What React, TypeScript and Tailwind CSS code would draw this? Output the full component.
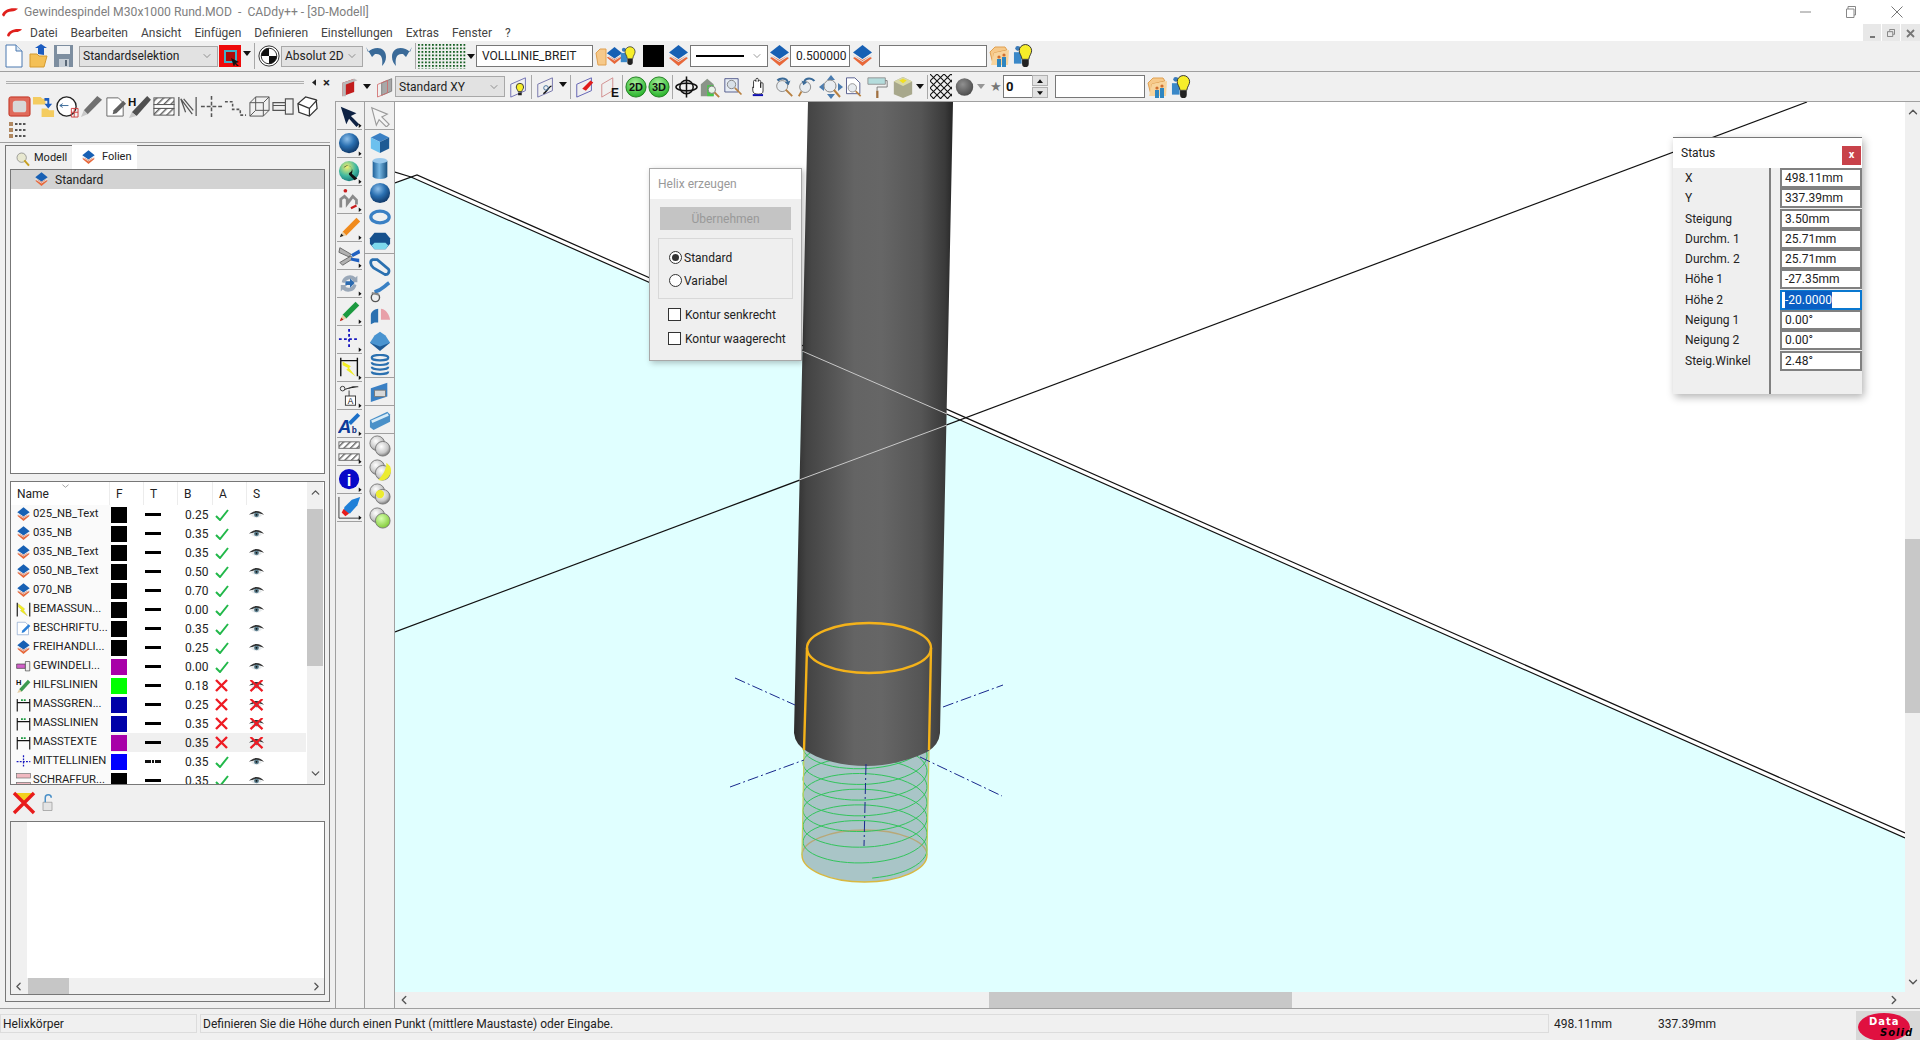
import React from 'react';
import { ChevronDown, ChevronLeft, ChevronRight, ChevronUp } from 'lucide-react';

type P = { className?: string; children?: React.ReactNode; vb?: string };

const Ic = ({ className = 'w-[22px] h-[22px]', children, vb = '0 0 24 24' }: P) => (
  <svg viewBox={vb} className={`shrink-0 ${className}`}>{children}</svg>
);

const Defs = () => (
  <svg className="absolute w-0 h-0">
    <defs>
      <radialGradient id="bb" cx="0.4" cy="0.3" r="0.8">
        <stop offset="0" stopColor="#8fc0ea" />
        <stop offset="0.45" stopColor="#2a6fb0" />
        <stop offset="1" stopColor="#0a2a55" />
      </radialGradient>
      <radialGradient id="gb" cx="0.4" cy="0.35" r="0.75">
        <stop offset="0" stopColor="#ffffff" />
        <stop offset="0.6" stopColor="#c8c8c8" />
        <stop offset="1" stopColor="#5a5a5a" />
      </radialGradient>
      <radialGradient id="db" cx="0.4" cy="0.35" r="0.75">
        <stop offset="0" stopColor="#909090" />
        <stop offset="1" stopColor="#444444" />
      </radialGradient>
      <radialGradient id="gr" cx="0.4" cy="0.35" r="0.8">
        <stop offset="0" stopColor="#d8ffb0" />
        <stop offset="1" stopColor="#70c020" />
      </radialGradient>
      <radialGradient id="grn" cx="0.45" cy="0.3" r="0.8">
        <stop offset="0" stopColor="#a6f09a" />
        <stop offset="1" stopColor="#12a818" />
      </radialGradient>
      <radialGradient id="sw" cx="0.4" cy="0.3" r="0.8">
        <stop offset="0" stopColor="#f4f070" />
        <stop offset="0.55" stopColor="#40b8a0" />
        <stop offset="1" stopColor="#106a70" />
      </radialGradient>
      <linearGradient id="cyl" x1="0" x2="1" y1="0" y2="0">
        <stop offset="0" stopColor="#1f6098" />
        <stop offset="0.45" stopColor="#78b8e4" />
        <stop offset="1" stopColor="#17507f" />
      </linearGradient>
      <linearGradient id="spindle" x1="0" x2="1" y1="0" y2="0">
        <stop offset="0" stopColor="#2c2c2c" />
        <stop offset="0.08" stopColor="#434343" />
        <stop offset="0.38" stopColor="#646464" />
        <stop offset="0.55" stopColor="#666666" />
        <stop offset="0.8" stopColor="#555555" />
        <stop offset="0.95" stopColor="#3a3a3a" />
        <stop offset="1" stopColor="#262626" />
      </linearGradient>
      <pattern id="hatch" width="5" height="5" patternUnits="userSpaceOnUse" patternTransform="rotate(-45)">
        <rect width="5" height="5" fill="#ffffff" />
        <rect width="5" height="1.5" fill="#666666" />
      </pattern>
      <pattern id="dots" width="3.500" height="3.500" patternUnits="userSpaceOnUse">
        <rect width="1.800" height="1.800" fill="#155f22" />
      </pattern>
      <pattern id="xx" width="7" height="7" patternUnits="userSpaceOnUse">
        <path d="M0 0L7 7M7 0L0 7" stroke="#111" strokeWidth="1.1" />
      </pattern>
    </defs>
  </svg>
);

const Logo = ({ className }: { className: string }) => (
  <svg viewBox="0 0 18 10" className={className}>
    <path d="M0 8C2 3 8 0 17 1.5C15 3 13 4.5 10 4.5C7 4.5 4 6 2.5 9.5C1.5 10 .5 9 0 8Z" fill="#e0201c" />
  </svg>
);

const LayerIcon = ({ className = 'w-[21px] h-[26px]' }: { className?: string }) => (
  <Ic className={className} vb="0 0 21 26">
    <path d="M1 15l3-1.5 6.500 3.500 6.500-3.500 3 1.500-9.500 8z" fill="#e8683a" />
    <path d="M1 9.500L10.500 2 20 9.500l-9.500 6.500z" fill="#1760b4" />
    <path d="M1 11.500l9.500 6.500 9.500-6.500v1.500l-9.500 6-9.500-6z" fill="#dfe6ee" />
  </Ic>
);

const Bulb = ({ className = 'w-[22px] h-[26px]' }: { className?: string }) => (
  <Ic className={className} vb="0 0 22 26">
    <circle cx="5" cy="5" r="2.600" fill="#3a7ab8" />
    <path d="M1 9h8v12H1z" fill="#3a88c8" />
    <path d="M13 1a6.500 6.500 0 0 1 6.500 6.500c0 3-2.500 5-3 9h-7c-.5-4-3-6-3-9A6.500 6.500 0 0 1 13 1z" fill="#f7ee2a" stroke="#303030" />
    <path d="M9.500 17h7v4a3 3 0 0 1-7 0z" fill="#222" />
  </Ic>
);

const FolderPeople = ({ className = 'w-[22px] h-[24px]' }: { className?: string }) => (
  <Ic className={className} vb="0 0 22 24">
    <path d="M1 8l5-5h10l2 3-13 3-1 11z" fill="#f6c98a" stroke="#e0a050" />
    <path d="M2 21L5 9l15-3-1 15z" fill="#f8d49c" />
    <path d="M8 15h4v8H8zM13 13h4v10h-4z" fill="#2f86c0" />
    <circle cx="10" cy="13" r="1.600" fill="#d07030" />
    <circle cx="15" cy="11" r="1.600" fill="#d07030" />
  </Ic>
);

const DropArrow = ({ className = '' }: { className?: string }) => (
  <svg viewBox="0 0 8 5" className={`w-[8px] h-[5px] shrink-0 ${className}`}><path d="M0 0h8L4 5z" fill="#111" /></svg>
);

const Sep = ({ className = 'h-[24px]' }: { className?: string }) => (
  <div className={`w-px bg-[#a8a8a8] shrink-0 ${className}`} />
);

const Combo = ({ className, label }: { className: string; label: string }) => (
  <div className={`flex items-center justify-between h-[21px] bg-[#e2e2e2] border border-[#a8a8a8] pl-[3px] pr-[4px] text-[12px] text-[#222] shrink-0 ${className}`}>
    <span>{label}</span>
    <ChevronDown className="w-[12px] h-[12px] text-[#555]" strokeWidth={1.2} />
  </div>
);

const Inp = ({ className, label = '' }: { className: string; label?: string }) => (
  <div className={`flex items-center h-[22px] bg-white border border-[#777] px-[5px] text-[12px] text-[#222] shrink-0 ${className}`}>{label}</div>
);

// small plane icons of the second toolbar
const Plane = ({ stroke = '#6a6ab0', children }: { stroke?: string; children?: React.ReactNode }) => (
  <Ic className="w-[22px] h-[24px]">
    <path d="M3 9L19 2v14L3 23z" fill="none" stroke={stroke} />
    {children}
  </Ic>
);

function Toolbar1() {
  return (
    <div className="flex items-center h-[31px] bg-[#f0f0f0] border-b border-[#a0a0a0] pl-[5px]">
      <Ic className="w-[18px] h-[24px]" vb="0 0 18 24">
        <path d="M1 1h10l6 6v16H1z" fill="#fff" stroke="#4a78b0" />
        <path d="M11 1v6h6" fill="#dbe8f4" stroke="#4a78b0" />
      </Ic>
      <Ic className="ml-[6px] w-[20px] h-[24px]" vb="0 0 20 24">
        <path d="M1 10h7l2 2h8l-3 11H1z" fill="#f4c056" stroke="#d49a30" />
        <path d="M7 10V4H4l6-4 6 4h-3v7z" fill="#1c5cc0" transform="translate(2 0)" />
      </Ic>
      <Ic className="ml-[4px] w-[21px] h-[24px]" vb="0 0 21 24">
        <path d="M1 1h19v22H1z" fill="#7d8ea0" />
        <path d="M4 2h13v8H4z" fill="#f0f2f4" />
        <path d="M6 15h10v8H6z" fill="#c6ced6" />
        <path d="M12 16h2v6h-2z" fill="#5a6878" />
      </Ic>
      <Combo className="ml-[5px] w-[139px]" label="Standardselektion" />
      <div className="ml-px w-[22px] h-[22px] bg-[#ee0a0a] flex items-center justify-center relative shrink-0">
        <div className="w-[13px] h-[13px] bg-[#b00808] border-2 border-[#40b0c8]" />
        <svg viewBox="0 0 8 8" className="w-[8px] h-[8px] absolute right-[2px] bottom-[1px]"><path d="M0 0l8 4-3 1 3 3-1 1-3-3-1 3z" fill="#111" /></svg>
      </div>
      <DropArrow className="ml-[2px] mb-[6px]" />
      <Sep className="ml-[3px] h-[26px]" />
      <Ic className="ml-[3px] w-[22px] h-[24px]">
        <circle cx="12" cy="12" r="11" fill="#fff" stroke="#222" />
        <circle cx="12" cy="12" r="8.500" fill="#fff" stroke="#222" />
        <path d="M12 12V3.500A8.500 8.500 0 0 0 3.500 12zM12 12v8.500a8.500 8.500 0 0 0 8.500-8.500z" fill="#111" />
      </Ic>
      <Combo className="ml-px w-[82px]" label="Absolut 2D" />
      <Ic className="ml-[2px] w-[24px] h-[24px]">
        <path d="M3 8c6-6 18-6 18 5 0 4-2 7-4 9 1-7 0-13-7-12L7 13 1 3z" fill="#3a6a98" />
      </Ic>
      <Ic className="w-[24px] h-[24px]">
        <path d="M21 8C15 2 3 2 3 13c0 4 2 7 4 9-1-7 0-13 7-12l3 3 6-10z" fill="#3a6a98" />
      </Ic>
      <Sep className="ml-[2px] h-[26px]" />
      <svg className="ml-[2px] w-[48px] h-[25px] shrink-0"><rect width="48" height="25" fill="url(#dots)" /></svg>
      <DropArrow className="ml-[1px]" />
      <Inp className="ml-[1px] w-[117px]" label="VOLLLINIE_BREIT" />
      <Ic className="ml-[2px] w-[12px] h-[24px]" vb="0 0 12 24">
        <path d="M1 9l4-4h6v16H3z" fill="#f6c98a" stroke="#e0a050" />
      </Ic>
      <LayerIcon className="-ml-px w-[17px] h-[24px]" />
      <Bulb className="-ml-[3px] w-[17px] h-[26px]" />
      <div className="ml-[6px] w-[21px] h-[22px] bg-black shrink-0" />
      <LayerIcon className="ml-[4px] w-[21px] h-[26px]" />
      <div className="ml-px flex items-center justify-between w-[78px] h-[22px] bg-white border border-[#777] pl-[5px] pr-[4px] shrink-0">
        <div className="w-[48px] h-[2px] bg-black" />
        <ChevronDown className="w-[12px] h-[12px] text-[#555]" strokeWidth={1.2} />
      </div>
      <LayerIcon className="ml-px w-[21px] h-[26px]" />
      <Inp className="w-[60px]" label="0.500000" />
      <LayerIcon className="ml-[2px] w-[21px] h-[26px]" />
      <Inp className="ml-[6px] w-[108px]" />
      <FolderPeople className="ml-[2px] w-[22px] h-[24px]" />
      <Bulb className="ml-[2px] w-[21px] h-[26px]" />
    </div>
  );
}

function Toolbar2() {
  return (
    <div className="flex items-center h-[30px] bg-[#f0f0f0] border-b border-[#a0a0a0] pl-[5px]">
      <Ic className="w-[20px] h-[24px]">
        <path d="M3 7l14-5v16L3 23z" fill="#c21c1c" />
        <path d="M3 7l14-5 4 2-14 5v14l-4 0z" fill="#b8b8b8" />
      </Ic>
      <DropArrow className="ml-[3px]" />
      <Ic className="ml-[4px] w-[20px] h-[24px]">
        <path d="M8 7l12-5v15L8 22z" fill="#a8a8a8" stroke="#777" />
        <path d="M3 9l12-5v15L3 24z" fill="none" stroke="#d06a6a" />
      </Ic>
      <Combo className="w-[110px]" label="Standard XY" />
      <div className="ml-[3px]"><Plane><path d="M13 8a4 4 0 0 1 4 4c0 2-1.500 3-2 5h-4c-.5-2-2-3-2-5a4 4 0 0 1 4-4z" fill="#f7ee2a" stroke="#333" /><path d="M11 18h4v3h-4z" fill="#222" /></Plane></div>
      <Sep className="ml-px h-[24px]" />
      <div className="ml-[3px]"><Plane stroke="#7070a8"><path d="M9 19c3 0 6-8 9-8" fill="none" stroke="#111" strokeWidth="1.500" /><circle cx="12" cy="13" r="2.500" fill="none" stroke="#3a6a98" /></Plane></div>
      <DropArrow className="ml-[2px] mb-[4px]" />
      <Sep className="ml-[3px] h-[24px]" />
      <div className="ml-[3px]"><Plane stroke="#5a5ab0"><path d="M9 14l9-9 3 2-8 9z" fill="#e01c1c" /></Plane></div>
      <Ic className="ml-[3px] w-[22px] h-[24px]">
        <path d="M3 9L15 2v14L3 23z" fill="none" stroke="#d08a8a" />
        <text x="13" y="23" fontSize="13" fontWeight="700" fontFamily="Liberation Sans" fill="#111">E</text>
      </Ic>
      <Sep className="ml-[1px] h-[24px]" />
      <Ic className="ml-[2px] w-[22px] h-[24px]">
        <circle cx="12" cy="12" r="11" fill="url(#grn)" stroke="#1a7a1a" />
        <text x="12" y="16.500" textAnchor="middle" fontSize="12" fontWeight="700" fontFamily="Liberation Sans" fill="#111">2D</text>
      </Ic>
      <Ic className="ml-[1px] w-[22px] h-[24px]">
        <circle cx="12" cy="12" r="11" fill="url(#grn)" stroke="#1a7a1a" />
        <text x="12" y="16.500" textAnchor="middle" fontSize="12" fontWeight="700" fontFamily="Liberation Sans" fill="#111">3D</text>
      </Ic>
      <Sep className="ml-[2px] h-[24px]" />
      <Ic className="ml-[2px] w-[23px] h-[24px]">
        <circle cx="12" cy="12" r="7" fill="none" stroke="#111" strokeWidth="1.600" />
        <ellipse cx="12" cy="12" rx="11" ry="4" fill="none" stroke="#111" strokeWidth="1.600" />
        <path d="M12 1v22" stroke="#111" strokeWidth="1.600" />
      </Ic>
      <Ic className="ml-[1px] w-[22px] h-[26px]">
        <path d="M2 9l7-6 7 6v13H2z" fill="#8a9488" />
        <path d="M9 10h7v12H9z" fill="#46c846" />
        <circle cx="14" cy="15" r="4" fill="#e8f4e8" stroke="#777" />
        <path d="M17 18l5 5" stroke="#b88040" strokeWidth="2" />
      </Ic>
      <Ic className="ml-[3px] w-[20px] h-[26px]">
        <path d="M1 2h16v16H1z" fill="#e6ecf4" stroke="#404880" />
        <circle cx="9" cy="9" r="5" fill="#d8e0e8" stroke="#777" />
        <path d="M13 13l8 8" stroke="#b88040" strokeWidth="2" />
      </Ic>
      <Ic className="ml-[4px] w-[19px] h-[28px]">
        <path d="M7 13V5a1.500 1.500 0 0 1 3 0V2.500a1.500 1.500 0 0 1 3 0V5a1.500 1.500 0 0 1 3 0v8V8a1.500 1.500 0 0 1 3 0v9c0 3-2 4-6 4s-7-1-7-5v-4a1.500 1.500 0 0 1 1 1z" fill="#fff" stroke="#111" />
        <path d="M6 21h13v2.500H6z" fill="#1010b0" />
      </Ic>
      <Ic className="ml-[6px] w-[22px] h-[26px]">
        <circle cx="10" cy="11" r="6" fill="#e8ecf0" stroke="#888" />
        <path d="M14 15l7 7" stroke="#b88040" strokeWidth="2" />
        <path d="M4 4C8 0 16 1 17 6l2-1-2 5-4-3 2-1C13 3 8 3 6 6z" fill="#3a6a98" />
      </Ic>
      <Ic className="ml-[1px] w-[22px] h-[26px]">
        <circle cx="10" cy="12" r="6" fill="#e8ecf0" stroke="#888" />
        <path d="M6 17l-3 5" stroke="#b88040" strokeWidth="2" />
        <path d="M21 5C17 0 9 1 8 6l-2-1 2 5 4-3-2-1c2-3 7-3 9 0z" fill="#3a6a98" />
      </Ic>
      <Ic className="ml-[1px] w-[24px] h-[28px]">
        <path d="M12 0l4 5H8zM12 24l4-5H8zM0 12l5-4v8zM24 12l-5-4v8z" fill="#4a7cb0" />
        <circle cx="11" cy="11" r="6" fill="#e8ecf0" stroke="#888" />
        <path d="M15 15l6 7" stroke="#b88040" strokeWidth="2" />
      </Ic>
      <Ic className="ml-[1px] w-[20px] h-[26px]">
        <path d="M3 1h10l6 6v13H3z" fill="#fff" stroke="#404880" />
        <circle cx="10" cy="13" r="5" fill="#e8ecf0" stroke="#888" />
        <path d="M14 17l6 6" stroke="#b88040" strokeWidth="2" />
      </Ic>
      <Ic className="ml-[3px] w-[22px] h-[26px]">
        <path d="M1 2h19v7H1z" fill="#b4dcdc" stroke="#909090" />
        <path d="M20 5h2v7H11v4" fill="none" stroke="#777" />
        <path d="M10 16h2.500v8H10z" fill="#a07040" />
      </Ic>
      <Ic className="ml-[3px] w-[22px] h-[26px]">
        <path d="M2 6l10-5 10 5v14l-10 4-10-4z" fill="#a8a88c" />
        <path d="M12 1l10 5-10 5L2 6z" fill="#d8d8a8" />
        <path d="M8 5l4-2 4 2-4 3z" fill="#f2e020" />
      </Ic>
      <DropArrow className="ml-[2px]" />
      <Sep className="ml-[3px] h-[24px]" />
      <svg className="ml-[2px] w-[22px] h-[25px] shrink-0"><rect width="22" height="25" fill="url(#xx)" /></svg>
      <Ic className="ml-[3px] w-[19px] h-[22px]"><circle cx="12" cy="12" r="11" fill="url(#db)" /></Ic>
      <DropArrow className="ml-[3px] opacity-40" />
      <span className="ml-[5px] text-[13px] leading-none text-[#777]">★</span>
      <div className="ml-[1px] flex items-center w-[29px] h-[23px] bg-white border border-[#777] border-r-0 pl-[2px] font-bold text-[13px] text-[#111] shrink-0">0</div>
      <div className="flex flex-col gap-px w-[16px] shrink-0">
        <div className="h-[11px] flex items-center justify-center bg-[#e2e2e2] border border-[#b0b0b0]"><svg viewBox="0 0 8 5" className="w-[6px] h-[4px]"><path d="M0 5h8L4 0z" fill="#111" /></svg></div>
        <div className="h-[11px] flex items-center justify-center bg-[#e2e2e2] border border-[#b0b0b0]"><svg viewBox="0 0 8 5" className="w-[6px] h-[4px]"><path d="M0 0h8L4 5z" fill="#111" /></svg></div>
      </div>
      <Inp className="ml-[7px] w-[90px] h-[23px]" />
      <FolderPeople className="ml-[2px] w-[22px] h-[24px]" />
      <Bulb className="ml-[2px] w-[21px] h-[26px]" />
    </div>
  );
}

// flyout triangle of the left tool column
const Fly = () => <path d="M22.500 21l3 2.500-3 2.500z" fill="#111" />;

const col1: React.ReactNode[] = [
  <path d="M3 3l17 7-6 3 9 9-3 3-8-9-3 6z" fill="#0e2244" />,
  <circle cx="12" cy="12" r="11" fill="url(#bb)" />,
  <><circle cx="12" cy="12" r="11" fill="url(#sw)" /><path d="M6 9c3-5 10-3 9 2-1 3-4 2-3 5l6 6 3-2-6-5c2-5-1-9-5-9-2 0-3 1-4 3z" fill="#111" /></>,
  <><path d="M3 21v-9l4-3 3 3v5l6-8 4 4v5" fill="none" stroke="#8a8a8a" strokeWidth="3" /><circle cx="8" cy="3" r="2" fill="#c81c1c" /><path d="M14 22l6-3" stroke="#c81c1c" strokeWidth="2.500" /></>,
  <><path d="M20 2l4 4L9 21l-4-4z" fill="#f08a1c" /><path d="M5 17l4 4-7 2z" fill="#e8d0a8" /><path d="M2 23l1.500-4 2.500 2.500z" fill="#222" /></>,
  <><path d="M2 4l12 7-2 3L1 9zM2 20l12-7 2 3-11 7z" fill="#b0b0b0" stroke="#666" /><path d="M14 11l9-5 1 4-8 4zM14 15l9 1v4l-9-2z" fill="#2060c0" /></>,
  <><path d="M4 11a9 9 0 0 1 15-5l2-2v7h-7l2-2a6 6 0 0 0-9 3zM20 14a9 9 0 0 1-15 5l-2 2v-7h7l-2 2a6 6 0 0 0 9-3z" fill="#9aa8b8" /><path d="M8 10h5V7l5 5-5 5v-3H8z" fill="#2a6ab0" /></>,
  <><path d="M19 2l4 4L9 20l-4-4z" fill="#1c9a40" /><path d="M5 16l4 4-7 3z" fill="#e8d0a8" /><path d="M2 23l1.500-4 2.500 2.500z" fill="#c02020" /></>,
  <path d="M12 1v22M1 12h22" stroke="#1818c0" strokeWidth="2" strokeDasharray="3 2.500" />,
  <><path d="M3 2v20M21 2v20M3 5h18" stroke="#111" strokeWidth="1.500" /><path d="M5 6l9 5-2 2 7 9-10-7 2-2-6-3z" fill="#f2ee20" /></>,
  <><circle cx="5" cy="5" r="2.500" fill="none" stroke="#333" /><path d="M7 6l9-3h6M12 7v6" stroke="#333" /><rect x="8" y="13" width="11" height="10" fill="#fff" stroke="#333" /><text x="13.500" y="21.500" textAnchor="middle" fontSize="9" fontFamily="Liberation Sans" fill="#111">A</text></>,
  <><text x="0" y="23" fontSize="20" fontWeight="700" fontStyle="italic" fontFamily="Liberation Sans" fill="#0c3a9a">A</text><text x="15" y="23" fontSize="9" fontWeight="700" fontFamily="Liberation Sans" fill="#0c2a7a">b</text><path d="M21 1l3 3-10 10-3-3z" fill="#1c70c8" /></>,
  <><rect x="1" y="2" width="22" height="7" fill="url(#hatch)" stroke="#666" /><rect x="1" y="15" width="22" height="7" fill="url(#hatch)" stroke="#666" /></>,
  <><circle cx="12" cy="12" r="11" fill="#0808c8" /><text x="12" y="19" textAnchor="middle" fontSize="18" fontWeight="700" fontFamily="Liberation Sans" fill="#fff">i</text></>,
  <><path d="M1 1v23h23" fill="none" stroke="#333" /><path d="M15 4l9-3-3 9-8 9-7-2 1-5z" fill="#2080d8" /><path d="M6 14l6 5-4 3-4-4z" fill="#e81c1c" /></>,
];

const Ball2 = ({ a = 'url(#gb)', b = 'url(#gb)' }: { a?: string; b?: string }) => (
  <><circle cx="9" cy="9" r="8" fill={a} stroke="#777" /><circle cx="15" cy="15" r="8" fill={b} stroke="#777" /></>
);

const col2: { h: string; sep?: boolean; el: React.ReactNode }[] = [
  { h: 'h-[28px]', sep: true, el: <path d="M3 3l17 7-6 3 8 8-3 3-8-8-3 6z" fill="#f4f4f4" stroke="#9a9a9a" strokeWidth="1.200" /> },
  { h: 'h-[25px]', el: <><path d="M2 6l10-5 10 5-10 5z" fill="#3a80c4" /><path d="M2 6l10 5v12L2 18z" fill="#6cc0ee" /><path d="M22 6l-10 5v12l10-5z" fill="#1e5a94" /></> },
  { h: 'h-[25px]', el: <><path d="M4 4v17a8 3 0 0 0 16 0V4z" fill="url(#cyl)" /><ellipse cx="12" cy="4" rx="8" ry="3" fill="#98c8ec" /></> },
  { h: 'h-[25px]', el: <circle cx="12" cy="12" r="11" fill="url(#bb)" /> },
  { h: 'h-[24px]', el: <ellipse cx="12" cy="12" rx="10" ry="6.500" fill="none" stroke="#3a80c4" strokeWidth="3.500" /> },
  { h: 'h-[25px]', sep: true, el: <><path d="M6 3h12l5 6v6l-5 6H6l-5-6V9z" fill="#16508c" /><path d="M6 14h12l3 3-3 4H6l-3-4z" fill="#7ed8ec" /></> },
  { h: 'h-[25px]', el: <path d="M4 4h5l12 10c2 3 0 7-4 6L5 13C1 10 1 5 4 4z" fill="none" stroke="#2a70b0" strokeWidth="3" /> },
  { h: 'h-[25px]', el: <><path d="M22 2C16 6 14 10 6 12" fill="none" stroke="#3a80c4" strokeWidth="4" /><circle cx="7" cy="18" r="4.500" fill="none" stroke="#555" strokeWidth="1.500" /><path d="M3 13l8 2" stroke="#888" strokeWidth="2" /></> },
  { h: 'h-[25px]', el: <><path d="M2 20V10c0-4 5-7 8-7v15H6z" fill="#2a70b0" /><path d="M13 3c4 0 9 5 10 12H13z" fill="#e8a0a8" /></> },
  { h: 'h-[24px]', el: <><path d="M1 14l11 9 11-9-5-3H6z" fill="#1e5a94" /><path d="M6 6l6-4 6 4 5 8-11 4L1 14z" fill="#4a94d0" /></> },
  { h: 'h-[25px]', sep: true, el: <path d="M3 4a9 3 0 0 1 18 0a9 3 0 0 1-18 0M3 9a9 3 0 0 0 18 0M3 14a9 3 0 0 0 18 0M3 19a9 3 0 0 0 18 0" fill="none" stroke="#2a70b0" strokeWidth="2.400" /> },
  { h: 'h-[28px]', sep: true, el: <><path d="M2 8l18-6v15L2 23z" fill="#3a80c4" /><path d="M6 10h12v7H6z" fill="#d8d8d8" stroke="#777" /></> },
  { h: 'h-[28px]', sep: true, el: <><path d="M1 12L20 3l3 3v8L5 23l-4-3z" fill="#4a90c8" /><path d="M3 14l18-8" stroke="#d8ecf8" strokeWidth="3" /></> },
  { h: 'h-[24px]', el: <Ball2 /> },
  { h: 'h-[24px]', el: <><Ball2 /><path d="M10 23A11 11 0 0 0 23 8l-4-4c0 8-4 13-9 19z" fill="#ecec30" /></> },
  { h: 'h-[24px]', el: <><Ball2 /><circle cx="12" cy="12" r="4.500" fill="#ecec30" /></> },
  { h: 'h-[24px]', el: <Ball2 b="url(#gr)" /> },
];

function VerticalTools() {
  return (
    <div className="flex w-[60px] shrink-0 bg-[#f0f0f0] border-l border-[#a0a0a0]">
      <div className="w-[29px] border-r border-[#a0a0a0] flex flex-col pl-[1px]">
        {col1.map((el, i) => (
          <div key={i} className="h-[28px] flex items-center justify-center border-b border-[#a0a0a0] mr-[2px]">
            <svg viewBox="0 0 26 26" className="w-[24px] h-[24px]">{el}<Fly /></svg>
          </div>
        ))}
      </div>
      <div className="flex-1 border-r border-[#a0a0a0] flex flex-col">
        {col2.map((c, i) => (
          <div key={i} className={`${c.h} flex items-center justify-center ${c.sep ? 'border-b border-[#a0a0a0]' : ''}`}>
            <Ic className="w-[22px] h-[22px]">{c.el}</Ic>
          </div>
        ))}
      </div>
    </div>
  );
}

const Dim = ({ color }: { color: string }) => (
  <Ic className="w-[15px] h-[15px] shrink-0">
    <path d="M2 3v20M22 3v20M2 9h20" stroke="#111" strokeWidth="1.800" fill="none" />
    <path d="M8 5h8" stroke={color} strokeWidth="3" strokeDasharray="3 1.500" />
  </Ic>
);

const rowIcons: Record<string, React.ReactNode> = {
  layer: <LayerIcon className="w-[15px] h-[17px]" />,
  bem: (
    <Ic className="w-[15px] h-[15px]">
      <path d="M2 1v22M22 1v22" stroke="#111" strokeWidth="1.800" />
      <path d="M4 3l10 8-2 2 6 9-11-8 2-2-5-4z" fill="#f2ee20" stroke="#b8b020" strokeWidth=".5" />
    </Ic>
  ),
  doc: (
    <Ic className="w-[15px] h-[15px]">
      <path d="M2 2h13l5 5v15H2z" fill="#fff" stroke="#7a9ac8" />
      <path d="M10 15l10-10 3 3-10 10-4 1z" fill="#2c80d8" />
    </Ic>
  ),
  screw: (
    <Ic className="w-[15px] h-[15px]">
      <path d="M1 8h14v7H1z" fill="#d060c8" stroke="#333" />
      <path d="M15 4h7v15h-7z" fill="#eee" stroke="#333" />
    </Ic>
  ),
  hilf: (
    <Ic className="w-[15px] h-[16px]">
      <text x="0" y="11" fontSize="12" fontWeight="700" fontFamily="Liberation Sans" fill="#111">H</text>
      <path d="M19 2l4 4L9 21l-4-4z" fill="#3c9a50" />
      <path d="M5 17l4 4-7 2z" fill="#e8d0a8" />
    </Ic>
  ),
  gren: <Dim color="#1c9a40" />,
  mitt: (
    <Ic className="w-[15px] h-[15px]">
      <path d="M12 2v20M1 12h22" stroke="#1818c0" strokeWidth="2" strokeDasharray="3 2" />
    </Ic>
  ),
  schr: (
    <Ic className="w-[15px] h-[15px]">
      <rect x="1" y="1" width="22" height="7" fill="#f0b8c0" stroke="#666" />
      <rect x="1" y="15" width="22" height="7" fill="#f0b8c0" stroke="#666" />
    </Ic>
  ),
};

const layers = [
  { icon: 'layer', name: '025_NB_Text', color: 'bg-black', b: '0.25', on: true },
  { icon: 'layer', name: '035_NB', color: 'bg-black', b: '0.35', on: true },
  { icon: 'layer', name: '035_NB_Text', color: 'bg-black', b: '0.35', on: true },
  { icon: 'layer', name: '050_NB_Text', color: 'bg-black', b: '0.50', on: true },
  { icon: 'layer', name: '070_NB', color: 'bg-black', b: '0.70', on: true },
  { icon: 'bem', name: 'BEMASSUN...', color: 'bg-black', b: '0.00', on: true },
  { icon: 'doc', name: 'BESCHRIFTU...', color: 'bg-black', b: '0.35', on: true },
  { icon: 'layer', name: 'FREIHANDLI...', color: 'bg-black', b: '0.25', on: true },
  { icon: 'screw', name: 'GEWINDELI...', color: 'bg-[#a800a8]', b: '0.00', on: true },
  { icon: 'hilf', name: 'HILFSLINIEN', color: 'bg-[#00ff00]', b: '0.18', on: false },
  { icon: 'gren', name: 'MASSGREN...', color: 'bg-[#0000a8]', b: '0.25', on: false },
  { icon: 'gren', name: 'MASSLINIEN', color: 'bg-[#0000a8]', b: '0.35', on: false },
  { icon: 'gren', name: 'MASSTEXTE', color: 'bg-[#a800a8]', b: '0.35', on: false, hi: true },
  { icon: 'mitt', name: 'MITTELLINIEN', color: 'bg-[#0000ff]', b: '0.35', on: true, dash: true },
  { icon: 'schr', name: 'SCHRAFFUR...', color: 'bg-black', b: '0.35', on: true },
];

const Eye = () => (
  <svg viewBox="0 0 16 10" className="w-[15px] h-[10px]">
    <path d="M0 5c3-5 12-6 16 0-4-2-12-2-16 0z" fill="#333" />
    <path d="M2 5c3 4 9 4 12 0-3-2-9-2-12 0z" fill="#e4e8ea" />
    <circle cx="8" cy="4.800" r="2.600" fill="#567a8a" />
    <circle cx="8" cy="4.800" r="1" fill="#111" />
  </svg>
);

const Check = () => (
  <svg viewBox="0 0 14 12" className="w-[14px] h-[12px]"><path d="M1 7l4 4 8-10" fill="none" stroke="#22b84a" strokeWidth="2" /></svg>
);

const Cross = () => (
  <svg viewBox="0 0 13 13" className="w-[13px] h-[13px]"><path d="M1 1l11 11M12 1L1 12" stroke="#ee1c24" strokeWidth="2.400" /></svg>
);

function LayerTable() {
  return (
    <div className="mx-[5px] h-[304px] border border-[#777] bg-white flex overflow-hidden text-[12px] text-[#222] relative">
      <div className="w-[295px] shrink-0 flex flex-col">
        <div className="grid grid-cols-[99px_34px_34px_35px_34px_59px] h-[23px] shrink-0 relative">
          {['Name', 'F', 'T', 'B', 'A', 'S'].map((h, i) => (
            <div key={h} className={`flex items-center ${i === 5 ? 'pl-[6px]' : 'pl-[6px] border-r border-[#ececec]'}`}>{h}</div>
          ))}
          <svg viewBox="0 0 8 4" className="absolute left-[51px] top-[2px] w-[7px] h-[4px]"><path d="M.5.5L4 3.500 7.500.5" fill="none" stroke="#999" /></svg>
        </div>
        {layers.map((l) => (
          <div key={l.name} className="flex items-center h-[19px] shrink-0">
            <div className="w-[100px] shrink-0 flex items-center gap-[2px] pl-[5px] bg-[#fafafa] h-full whitespace-nowrap overflow-hidden text-[11.250px]">
              {rowIcons[l.icon]}
              <span>{l.name}</span>
            </div>
            <div className={`flex items-center flex-1 h-full ${l.hi ? 'bg-[#f0f0f0]' : ''}`}>
              <div className={`w-[16px] h-[16px] shrink-0 ${l.color}`} />
              <div className="w-[34px] shrink-0 flex justify-end">
                {l.dash
                  ? <div className="w-[16px] h-[3px] bg-[linear-gradient(90deg,#111_0_6px,transparent_6px_7px,#111_7px_9px,transparent_9px_10px,#111_10px)]" />
                  : <div className="w-[16px] h-[3px] bg-black" />}
              </div>
              <div className="w-[54px] shrink-0 pl-[24px]">{l.b}</div>
              <div className="w-[34px] shrink-0">{l.on ? <Check /> : <Cross />}</div>
              <div className="relative w-[15px] h-[12px] flex items-center">
                <Eye />
                {!l.on && <svg viewBox="0 0 15 13" className="absolute inset-0 w-[15px] h-[12px]"><path d="M1 0l13 12M14 0L1 12" stroke="#ee1c24" strokeWidth="2.400" /></svg>}
              </div>
            </div>
          </div>
        ))}
      </div>
      <div className="w-[16px] ml-[1px] shrink-0 bg-[#f0f0f0] flex flex-col items-center justify-between py-[4px] relative">
        <ChevronUp className="w-[13px] h-[13px] text-[#555]" strokeWidth={2.400} />
        <ChevronDown className="w-[13px] h-[13px] text-[#555]" strokeWidth={2.400} />
        <div className="absolute left-0 right-0 top-[27px] h-[157px] bg-[#c6c6c6]" />
      </div>
    </div>
  );
}

function LeftPanel() {
  const tools: React.ReactNode[] = [
    <><rect x="1" y="2" width="22" height="20" rx="2" fill="#e06a5a" stroke="#c03020" /><rect x="5" y="6" width="14" height="12" rx="3" fill="#d8d8d8" /></>,
    <><path d="M1 2h8l2 2h3v6H1z" fill="#f4cc60" /><path d="M10 14h6l2 2h5v7H10z" fill="#f4cc60" /><path d="M13 3h5v6h3l-4 5-4-5h3V6h-3z" fill="#1c5cc0" /></>,
    <><circle cx="11" cy="12" r="10" fill="#fff" stroke="#222" strokeWidth="1.400" /><path d="M4 11h9M4 11l3-2M4 11l3 2" stroke="#3a6a98" /><path d="M16 14h7v9h-7zM16 18h7M19 14v9" fill="none" stroke="#d04040" /></>,
    <><path d="M18 1l5 4L8 20l-4-4z" fill="#707070" /><path d="M4 16l4 4-7 3z" fill="#c8c8c8" /></>,
    <><path d="M3 3h12l5 5v14H3z" fill="#fff" stroke="#666" /><path d="M10 16l10-10 3 3-10 10-4 1z" fill="#606060" /></>,
    <><text x="0" y="11" fontSize="12" fontWeight="700" fontFamily="Liberation Sans" fill="#111">H</text><path d="M20 1l4 4L9 22l-5-4z" fill="#505050" /><path d="M4 18l5 4-8 2z" fill="#c8c8c8" /></>,
    <><rect x="2" y="3" width="21" height="7" fill="url(#hatch)" stroke="#555" /><rect x="2" y="10" width="21" height="4" fill="#fff" stroke="#555" /><rect x="2" y="14" width="21" height="7" fill="url(#hatch)" stroke="#555" /></>,
    <path d="M3 2v20M21 2v20M5 4l12 16M5 4l5 14M8 4l10 12" stroke="#555" fill="none" strokeWidth="1.300" />,
    <path d="M12 1v22M1 12h22" stroke="#555" strokeWidth="1.600" strokeDasharray="4 2" />,
    <path d="M1 7h8v8h8v6h6" stroke="#555" fill="none" strokeWidth="1.600" strokeDasharray="3 2" />,
    <path d="M8 2h14v14H8zM2 8h14v14H2zM2 8l6-6M16 8l6-6M16 22l6-6M2 22l6-6" stroke="#555" fill="none" strokeWidth="1" />,
    <path d="M1 8h13v8H1zM1 11h13M14 4h8v16h-8z" stroke="#555" fill="#f0f0f0" strokeWidth="1.200" />,
    <path d="M2 9l8-7 11 3 1 9-8 8-11-4zM2 9l12 5M14 14l8-9M14 14v8" stroke="#333" fill="#fff" strokeWidth="1.300" />,
  ];
  return (
    <div className="w-[335px] shrink-0 bg-[#f0f0f0] flex flex-col">
      <div className="h-[20px] flex items-center pl-[6px] shrink-0">
        <div className="w-[298px] h-[3px] border-y border-[#b0b0b0]" />
        <svg viewBox="0 0 5 8" className="ml-[8px] w-[4px] h-[7px]"><path d="M5 0v8L0 4z" fill="#222" /></svg>
        <span className="ml-[7px] text-[13px] font-bold leading-none text-[#222]">×</span>
      </div>
      <div className="h-[51px] pl-[8px] border-b border-[#a0a0a0] mr-[5px] shrink-0">
        <div className="flex items-center gap-[1px] h-[28px]">
          {tools.map((t, i) => (
            <Ic key={i} className="w-[23px] h-[23px]">{t}</Ic>
          ))}
        </div>
        <svg viewBox="0 0 20 18" className="w-[20px] h-[18px] mt-[1px]">
          <path d="M1 1h4v4H1zM1 7h4v4H1zM1 13h4v4H1z" fill="#b08860" />
          <path d="M7 3h11M7 9h11M7 15h11" stroke="#222" strokeWidth="1.600" strokeDasharray="2.500 1.500" />
        </svg>
      </div>
      <div className="mx-[5px] mt-[2px] h-[857px] border border-[#777] flex flex-col pb-[3px] relative">
        <div className="h-[23px] flex items-end pl-[5px] shrink-0">
          <div className="w-[61px] h-[21px] flex items-center gap-[3px] pl-[4px] text-[11px] text-[#222]">
            <Ic className="w-[16px] h-[16px]"><circle cx="10" cy="10" r="7" fill="#e8e8d0" stroke="#777" /><path d="M14 14l7 8" stroke="#c8a020" strokeWidth="3" /></Ic>
            Modell
          </div>
          <div className="w-[65px] h-[24px] bg-white flex items-center gap-[6px] pl-[9px] text-[11px] text-[#222]">
            <LayerIcon className="w-[15px] h-[17px]" />
            Folien
          </div>
        </div>
        <div className="h-[305px] border border-[#777] mx-[4px] bg-white shrink-0">
          <div className="h-[19px] bg-[#d3d3d3] flex items-center gap-[6px] pl-[23px] text-[12px] text-[#222]">
            <LayerIcon className="w-[15px] h-[17px]" />
            Standard
          </div>
        </div>
        <div className="h-[7px] shrink-0" />
        <div className="-mx-[1px]"><LayerTable /></div>
        <div className="h-[36px] flex items-center pl-[6px] gap-[4px] shrink-0">
          <Ic className="w-[24px] h-[24px]">
            <path d="M3 2h18l-9 10z" fill="#f2d020" />
            <path d="M2 2l20 20M22 2L2 22" stroke="#e81c1c" strokeWidth="3.400" />
          </Ic>
          <Ic className="w-[18px] h-[22px]">
            <path d="M4 11h12v11H4z" fill="#e4e4e4" stroke="#999" />
            <path d="M7 11V5a4 4 0 0 1 8 0" fill="none" stroke="#4a90c8" strokeWidth="2" />
          </Ic>
        </div>
        <div className="mx-[4px] h-[174px] border border-[#777] bg-white flex flex-col shrink-0">
          <div className="flex flex-1">
            <div className="w-[16px] bg-[#f0f0f0]" />
          </div>
          <div className="h-[16px] bg-[#f0f0f0] flex items-center justify-between px-[1px] relative">
            <ChevronLeft className="w-[13px] h-[13px] text-[#555]" strokeWidth={2.400} />
            <ChevronRight className="w-[13px] h-[13px] text-[#555]" strokeWidth={2.400} />
            <div className="absolute top-0 bottom-0 left-[17px] w-[41px] bg-[#c6c6c6]" />
          </div>
        </div>
      </div>
    </div>
  );
}

const helixPath = (() => {
  const pts: string[] = [];
  for (let t = 0; t <= Math.PI * 16.5; t += 0.12) {
    const x = 865 + 62 * Math.cos(t);
    const y = 724 + 25 * Math.sin(t) + (15.7 * t) / (2 * Math.PI);
    pts.push(`${x.toFixed(1)} ${y.toFixed(1)}`);
  }
  return 'M' + pts.join('L');
})();

function Scene() {
  return (
    <svg viewBox="395 102 1510 890" className="w-[1510px] h-[890px] block">
      <rect x="395" y="102" width="1510" height="890" fill="#fff" />
      <path d="M395 183L411 177L1905 838V992H395Z" fill="#e0ffff" />
      <g stroke="#111" strokeWidth="1.200" fill="none">
        <path d="M395 172L411 177L1905 838" />
        <path d="M395 183L417 175L1905 833" />
        <path d="M395 632L1807 102" />
      </g>
      <path d="M804 750L802 855A62.500 27 0 0 0 927 855L929 750Z" fill="#a9c5c7" />
      <path d="M802 855A62.500 25 0 0 1 927 855" fill="none" stroke="#b8a878" strokeWidth="1.400" />
      <path d={helixPath} fill="none" stroke="#32c45c" strokeWidth="1" />
      <path d="M802 855A62.500 27 0 0 0 927 855" fill="none" stroke="#d8b840" strokeWidth="1.400" />
      <path d="M804 750L802 855M929 750L927 855" stroke="#c8d060" strokeWidth="1.200" />
      <path d="M808 102H953L940 733Q939 745 927 752C905 762 885 766 867 766C845 766 825 762 808 752Q795 745 794 733Z" fill="url(#spindle)" />
      <path d="M802 351L947 414M799 480L947 425" stroke="#c8c8c8" strokeWidth="1" fill="none" />
      <g stroke="#f4b21a" strokeWidth="2.400" fill="none">
        <ellipse cx="869" cy="648" rx="62" ry="25" />
        <path d="M807 648L804 750M931 648L929 750" />
      </g>
      <g stroke="#18288c" strokeWidth="1" strokeDasharray="11 3 2 3" fill="none">
        <path d="M735 678L795 705" />
        <path d="M943 707L1003 685" />
        <path d="M730 787L804 760" />
        <path d="M920 757L1002 796" />
        <path d="M866 764L864 846" />
      </g>
    </svg>
  );
}

function HelixDialog() {
  return (
    <div className="absolute left-[254px] top-[66px] w-[153px] h-[193px] border border-[#a8a8a8] bg-[#efefef] shadow-[2px_2px_6px_rgba(0,0,0,0.25)] flex flex-col text-[12px] text-[#222]">
      <div className="h-[30px] bg-white flex items-center pl-[8px] text-[#999] shrink-0">Helix erzeugen</div>
      <div className="mx-[10px] mt-[8px] h-[23px] bg-[#c4c4c4] flex items-center justify-center text-[#999]">Übernehmen</div>
      <div className="mx-[8px] mt-[8px] h-[61px] border border-[#d8d8d8] flex flex-col pl-[10px] pt-[12px] gap-[10px]">
        <div className="flex items-center gap-[2px] h-[13px]">
          <div className="w-[13px] h-[13px] rounded-full border border-[#333] bg-white flex items-center justify-center">
            <div className="w-[7px] h-[7px] rounded-full bg-[#333]" />
          </div>
          Standard
        </div>
        <div className="flex items-center gap-[2px] h-[13px]">
          <div className="w-[13px] h-[13px] rounded-full border border-[#333] bg-white" />
          Variabel
        </div>
      </div>
      <div className="flex flex-col pl-[18px] mt-[9px] gap-[11px]">
        <div className="flex items-center gap-[4px] h-[13px]"><div className="w-[13px] h-[13px] border border-[#333] bg-white" />Kontur senkrecht</div>
        <div className="flex items-center gap-[4px] h-[13px]"><div className="w-[13px] h-[13px] border border-[#333] bg-white" />Kontur waagerecht</div>
      </div>
    </div>
  );
}

const statusRows = [
  ['X', '498.11mm'],
  ['Y', '337.39mm'],
  ['Steigung', '3.50mm'],
  ['Durchm. 1', '25.71mm'],
  ['Durchm. 2', '25.71mm'],
  ['Höhe 1', '-27.35mm'],
  ['Höhe 2', '-20.0000'],
  ['Neigung 1', '0.00°'],
  ['Neigung 2', '0.00°'],
  ['Steig.Winkel', '2.48°'],
];

function StatusDialog() {
  return (
    <div className="absolute left-[1278px] top-[35px] w-[189px] h-[257px] bg-[#efefef] border-t border-[#777] shadow-[2px_3px_8px_rgba(0,0,0,0.3)] flex flex-col text-[12px] text-[#222]">
      <div className="h-[30px] bg-white flex items-center justify-between pl-[8px] pr-[1px] shrink-0">
        Status
        <div className="w-[19px] h-[19px] bg-[#c8424a] text-white flex items-center justify-center text-[11px] font-bold mt-[4px]">x</div>
      </div>
      <div className="flex flex-1">
        <div className="w-[96px] flex flex-col gap-[0.300px] pl-[12px]">
          {statusRows.map(([k]) => <div key={k} className="h-[20px] flex items-center">{k}</div>)}
        </div>
        <div className="w-[2px] bg-[#808080]" />
        <div className="ml-[9px] w-[82px] flex flex-col gap-[0.300px]">
          {statusRows.map(([k, v]) => (
            k === 'Höhe 2'
              ? <div key={k} className="h-[20px] flex items-center bg-white border-2 border-[#0a78d0] pl-[3px]"><span className="bg-[#0a5fc4] text-white">{v}</span></div>
              : <div key={k} className="h-[20px] flex items-center bg-white border-2 border-[#808080] pl-[3px]">{v}</div>
          ))}
        </div>
      </div>
    </div>
  );
}

function Workspace() {
  return (
    <div className="flex-1 flex flex-col min-w-0">
      <Toolbar2 />
      <div className="flex flex-1 min-h-0">
        <VerticalTools />
        <div className="flex-1 flex flex-col min-w-0">
          <div className="flex h-[890px] shrink-0">
            <div className="relative w-[1510px] h-[890px] shrink-0 overflow-hidden">
              <Scene />
              <HelixDialog />
              <StatusDialog />
            </div>
            <div className="w-[15px] bg-[#f0f0f0] flex flex-col items-center justify-between py-[3px] relative">
              <ChevronUp className="w-[14px] h-[14px] text-[#555]" strokeWidth={2.400} />
              <ChevronDown className="w-[14px] h-[14px] text-[#555]" strokeWidth={2.400} />
              <div className="absolute left-0 right-0 top-[437px] h-[174px] bg-[#c8c8c8]" />
            </div>
          </div>
          <div className="h-[16px] bg-[#f0f0f0] flex items-center justify-between pl-[2px] pr-[19px] relative">
            <ChevronLeft className="w-[14px] h-[14px] text-[#555]" strokeWidth={2.400} />
            <ChevronRight className="w-[14px] h-[14px] text-[#555]" strokeWidth={2.400} />
            <div className="absolute top-0 bottom-0 left-[594px] w-[303px] bg-[#c8c8c8]" />
          </div>
        </div>
      </div>
    </div>
  );
}

export default function App() {
  const menu = ['Datei', 'Bearbeiten', 'Ansicht', 'Einfügen', 'Definieren', 'Einstellungen', 'Extras', 'Fenster', '?'];
  return (
    <div className="w-[1920px] h-[1040px] flex flex-col overflow-hidden bg-white font-['Roboto',sans-serif] text-[12px]">
      <Defs />
      {/* title bar */}
      <div className="h-[24px] flex items-center shrink-0 pl-[2px]">
        <Logo className="w-[17px] h-[10px]" />
        <span className="ml-[5px] text-[#808080] text-[12.200px] whitespace-pre">Gewindespindel M30x1000 Rund.MOD  -  CADdy++ - [3D-Modell]</span>
        <div className="ml-auto flex items-center pr-[17px] gap-[35px]">
          <svg viewBox="0 0 11 2" className="w-[11px] h-[2px]"><path d="M0 1h11" stroke="#888" /></svg>
          <svg viewBox="0 0 10 12" className="w-[10px] h-[12px]"><path d="M2 3V.5h7.500V9H8M.5 3h7.500v8.500H.5z" fill="none" stroke="#888" /></svg>
          <svg viewBox="0 0 12 12" className="w-[12px] h-[12px]"><path d="M.5.5l11 11M11.500.5l-11 11" stroke="#777" /></svg>
        </div>
      </div>
      {/* menu bar */}
      <div className="h-[17px] flex items-center shrink-0 pl-[7px] text-[#444]">
        <Logo className="w-[16px] h-[9px]" />
        <div className="ml-[7px] flex gap-[13px] text-[12px]">
          {menu.map((m) => <span key={m}>{m}</span>)}
        </div>
        <div className="ml-auto flex gap-[1px] h-[18px] self-start">
          <div className="w-[18px] bg-[#e8e8e8] flex items-end justify-center pb-[4px]"><div className="w-[5px] h-[2px] bg-[#777]" /></div>
          <div className="w-[18px] bg-[#e8e8e8] flex items-center justify-center"><svg viewBox="0 0 9 9" className="w-[8px] h-[8px]"><path d="M3 2V.5h5.500V6H7M.5 3h6v5.500h-6z" fill="none" stroke="#777" /></svg></div>
          <div className="w-[19px] bg-[#e8e8e8] flex items-center justify-center"><svg viewBox="0 0 9 9" className="w-[9px] h-[9px]"><path d="M1 1l7 7M8 1L1 8" stroke="#777" strokeWidth="1.800" /></svg></div>
        </div>
      </div>
      <Toolbar1 />
      <div className="flex flex-1 min-h-0">
        <LeftPanel />
        <Workspace />
      </div>
      {/* status bar */}
      <div className="h-[32px] shrink-0 bg-[#f0f0f0] border-t border-[#a0a0a0] flex text-[12px] text-[#222]">
        <div className="w-[197px] h-[19px] mt-[5px] border border-[#dcdcdc] flex items-center pl-[2px] shrink-0">Helixkörper</div>
        <div className="ml-[3px] w-[1349px] h-[19px] mt-[5px] border border-[#dcdcdc] flex items-center pl-[2px] shrink-0">Definieren Sie die Höhe durch einen Punkt (mittlere Maustaste) oder Eingabe.</div>
        <div className="ml-[5px] w-[104px] mt-[5px] h-[19px] flex items-center shrink-0">498.11mm</div>
        <div className="w-[100px] mt-[5px] h-[19px] flex items-center shrink-0">337.39mm</div>
        <div className="ml-auto mt-[2px] w-[64px] h-[29px] bg-[#d8d8d8] relative overflow-hidden shrink-0">
          <div className="absolute left-[2px] top-[2px] w-[52px] h-[28px] rounded-[50%] bg-[#e01040]" />
          <span className="absolute left-[13px] top-[6px] text-[10px] leading-none font-bold tracking-[1px] text-white font-['DejaVu_Sans',sans-serif]">Data</span>
          <span className="absolute left-[24px] top-[17px] text-[10px] leading-none font-bold italic tracking-[1px] text-black font-['DejaVu_Sans',sans-serif]">Solid</span>
        </div>
      </div>
    </div>
  );
}
